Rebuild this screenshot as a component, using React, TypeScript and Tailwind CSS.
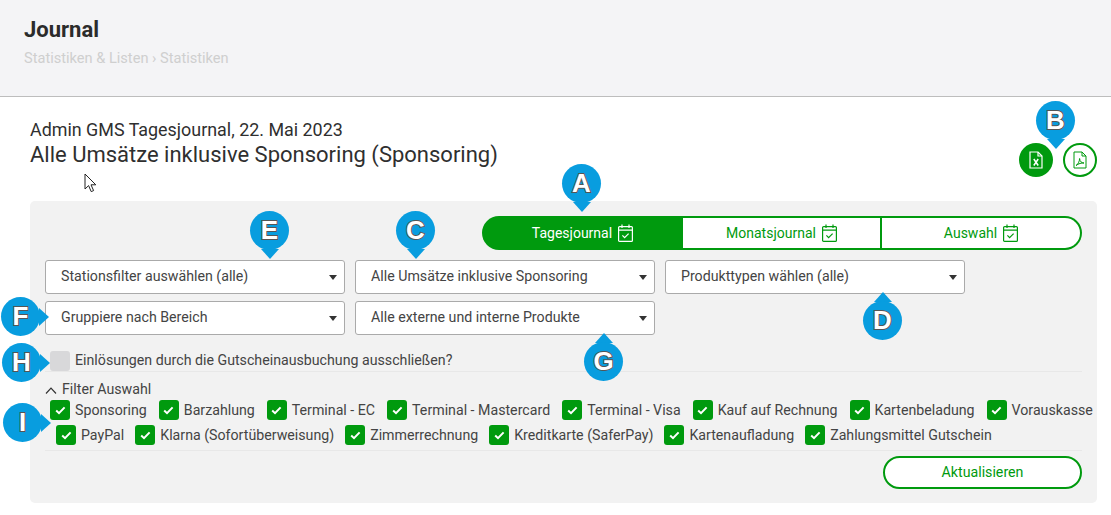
const font = 'font-["Roboto",sans-serif]'

const rowOne = [
  'Sponsoring',
  'Barzahlung',
  'Terminal - EC',
  'Terminal - Mastercard',
  'Terminal - Visa',
  'Kauf auf Rechnung',
  'Kartenbeladung',
  'Vorauskasse',
]
const rowTwo = [
  'PayPal',
  'Klarna (Sofortüberweisung)',
  'Zimmerrechnung',
  'Kreditkarte (SaferPay)',
  'Kartenaufladung',
  'Zahlungsmittel Gutschein',
]

export default function App() {
  return (
    <main className={`relative h-[515px] overflow-hidden bg-white text-[#444] ${font}`}>
      {/* Page header */}
      <header className="h-[97px] border-b border-[#bdbdbd] bg-[#f4f4f6] pl-[24px] pt-[16px]">
        <h1 className="text-[22px] leading-[28px] font-bold text-[#2b2b2b]">Journal</h1>
        <div className="mt-[6px] text-[14.6px] leading-[16px] text-[#cfcfcf]">Statistiken &amp; Listen › Statistiken</div>
      </header>

      <div className="px-[14px] pl-[30px]">
        {/* Title + exports */}
        <div className="flex h-[104px] justify-between pt-[22px]">
          <div>
            <div className="text-[17.9px] leading-[22px] text-[#2f2f2f]">Admin GMS Tagesjournal, 22. Mai 2023</div>
            <div className="text-[22px] leading-[28px] text-[#2f2f2f]">Alle Umsätze inklusive Sponsoring (Sponsoring)</div>
          </div>
          <div className="mt-[24px] flex gap-[10px]">
            <button className="flex h-[34px] w-[34px] items-center justify-center rounded-full bg-[#009a0e]">
              <ExcelIcon />
            </button>
            <button className="flex h-[34px] w-[34px] items-center justify-center rounded-full border-2 border-[#009a0e] bg-white">
              <PdfIcon />
            </button>
          </div>
        </div>

        {/* Filter panel */}
        <section className="h-[302px] rounded-[5px] bg-[#f2f2f2] px-[15px] pt-[15px]">
          <div className="ml-auto flex h-[34px] w-[600px]">
            <div className="flex w-[201px] items-center justify-center gap-[6px] rounded-l-full bg-[#009a0e] text-[14px] text-white">
              Tagesjournal <CalendarIcon />
            </div>
            <div className="flex w-[199px] items-center justify-center gap-[6px] border-y-2 border-r-2 border-[#009a0e] bg-white text-[14px] text-[#009a0e]">
              Monatsjournal <CalendarIcon />
            </div>
            <div className="flex w-[200px] items-center justify-center gap-[6px] rounded-r-full border-y-2 border-r-2 border-[#009a0e] bg-white text-[14px] text-[#009a0e]">
              Auswahl <CalendarIcon />
            </div>
          </div>

          <div className="mt-[10px] flex gap-[10px]">
            <FakeSelect label="Stationsfilter auswählen (alle)" />
            <FakeSelect label="Alle Umsätze inklusive Sponsoring" />
            <FakeSelect label="Produkttypen wählen (alle)" />
          </div>
          <div className="mt-[7px] flex gap-[10px]">
            <FakeSelect label="Gruppiere nach Bereich" />
            <FakeSelect label="Alle externe und interne Produkte" />
          </div>

          <div className="mt-[16px] flex h-[21px] items-start gap-[5px] border-b border-[#e8e8e8] pl-[5px]">
            <span className="h-[20px] w-[20px] rounded-[3px] bg-[#d8d8da]" />
            <span className="text-[14.2px] leading-[18px]">Einlösungen durch die Gutscheinausbuchung ausschließen?</span>
          </div>

          <div className="mt-[8px] flex h-[20px] items-center gap-[5px] text-[14.2px]">
            <svg width="12" height="7" viewBox="0 0 12 7" fill="none" stroke="#333" strokeWidth="1.2">
              <path d="M1 6.500 6 1.200l5 5.300" />
            </svg>
            Filter Auswahl
          </div>
          <div className="flex h-[20px] gap-[12px] pl-[5px]">
            {rowOne.map((label) => <Check key={label} label={label} />)}
          </div>
          <div className="mt-[5px] flex h-[20px] gap-[11px] pl-[11px]">
            {rowTwo.map((label) => <Check key={label} label={label} />)}
          </div>
          <div className="mt-[5px] border-b border-[#e8e8e8]" />

          <div className="mt-[5px] flex justify-end">
            <button className="h-[33px] w-[199px] rounded-full border-2 border-[#009a0e] bg-white text-[14.2px] text-[#009a0e]">
              Aktualisieren
            </button>
          </div>
        </section>
      </div>

      {/* Callouts */}
      <Bubble letter="A" dir="down" className="left-[562px] top-[164px]" />
      <Bubble letter="B" dir="down" className="left-[1036px] top-[101px]" />
      <Bubble letter="E" dir="down" className="left-[250px] top-[211px]" />
      <Bubble letter="C" dir="down" className="left-[396px] top-[211px]" />
      <Bubble letter="D" dir="up" className="left-[863px] top-[292px]" />
      <Bubble letter="G" dir="up" className="left-[584px] top-[333px]" />
      <Bubble letter="F" dir="right" className="left-[1px] top-[297px]" />
      <Bubble letter="H" dir="right" className="left-[2px] top-[343px]" />
      <Bubble letter="I" dir="right" className="left-[3px] top-[403px]" />

      {/* Mouse pointer */}
      <svg className="absolute left-[84px] top-[173px]" width="13" height="20" viewBox="0 0 13 20">
        <path d="M1 1v15l3.600-3.400 2.600 6 2.400-1-2.600-5.800h4.800z" fill="#fff" stroke="#222" strokeWidth="1" strokeLinejoin="round" />
      </svg>
    </main>
  )
}

function FakeSelect({ label }: { label: string }) {
  return (
    <div className="flex h-[34px] w-[300px] items-center justify-between rounded-[3px] border border-[#aaaaaa] bg-white pl-[15px] pr-[7px] text-[14.2px]">
      <span>{label}</span>
      <span className="h-0 w-0 border-x-[4.5px] border-t-[5px] border-x-transparent border-t-[#333]" />
    </div>
  )
}

function Check({ label }: { label: string }) {
  return (
    <label className="flex items-center gap-[5px] text-[14.2px] leading-[18px] whitespace-nowrap">
      <span className="flex h-[20px] w-[20px] items-center justify-center rounded-[3px] bg-[#009a0e]">
        <svg width="11" height="9" viewBox="0 0 11 9" fill="none" stroke="#fff" strokeWidth="2">
          <path d="M1.200 4.600 4 7.200 9.600 1.400" />
        </svg>
      </span>
      {label}
    </label>
  )
}

function Bubble({ letter, dir, className }: { letter: string; dir: 'down' | 'up' | 'right'; className: string }) {
  const circle = (
    <div className="flex h-[39px] w-[39px] items-center justify-center rounded-full bg-[#089ddf] font-['Liberation_Sans',sans-serif] text-[26px] font-bold text-white [-webkit-text-stroke:2px_#555] [paint-order:stroke_fill]">
      {letter}
    </div>
  )
  if (dir === 'down') {
    return (
      <div className={`absolute flex flex-col items-center ${className}`}>
        {circle}
        <span className="-mt-px h-0 w-0 border-x-[9px] border-t-[10px] border-x-transparent border-t-[#089ddf]" />
      </div>
    )
  }
  if (dir === 'up') {
    return (
      <div className={`absolute flex flex-col items-center ${className}`}>
        <span className="-mb-px h-0 w-0 border-x-[9px] border-b-[10px] border-x-transparent border-b-[#089ddf]" />
        {circle}
      </div>
    )
  }
  return (
    <div className={`absolute flex items-center ${className}`}>
      {circle}
      <span className="-ml-px h-0 w-0 border-y-[9px] border-l-[10px] border-y-transparent border-l-[#089ddf]" />
    </div>
  )
}

function CalendarIcon() {
  return (
    <svg width="15" height="18" viewBox="0 0 15 18" fill="none" stroke="currentColor" strokeWidth="1.2">
      <rect x="0.6" y="2.6" width="13.8" height="14.8" rx="1" />
      <path d="M0.6 6.200h13.800M4 0.500v3.600M11 0.500v3.600" />
      <path d="M4.400 11.400l2.200 2.200 4-4" />
    </svg>
  )
}

function ExcelIcon() {
  return (
    <svg width="14" height="18" viewBox="0 0 14 18" fill="none" stroke="#fff" strokeWidth="1.2">
      <path d="M1 1h8l4 4v12H1z" />
      <path d="M9 1v4h4" />
      <path d="M4.800 8l4.400 6.500M9.200 8l-4.400 6.500" strokeWidth="1.5" />
    </svg>
  )
}

function PdfIcon() {
  return (
    <svg width="14" height="18" viewBox="0 0 14 18" fill="none" stroke="#009a0e" strokeWidth="1">
      <path d="M1 1h8l4 4v12H1z" />
      <path d="M9 1v4h4" />
      <path d="M3 14.500c2-1 3.500-4 3.600-7 .1 3 2 4.400 4.400 4.500-2.500-.2-5.500.6-8 2.500z" />
    </svg>
  )
}
